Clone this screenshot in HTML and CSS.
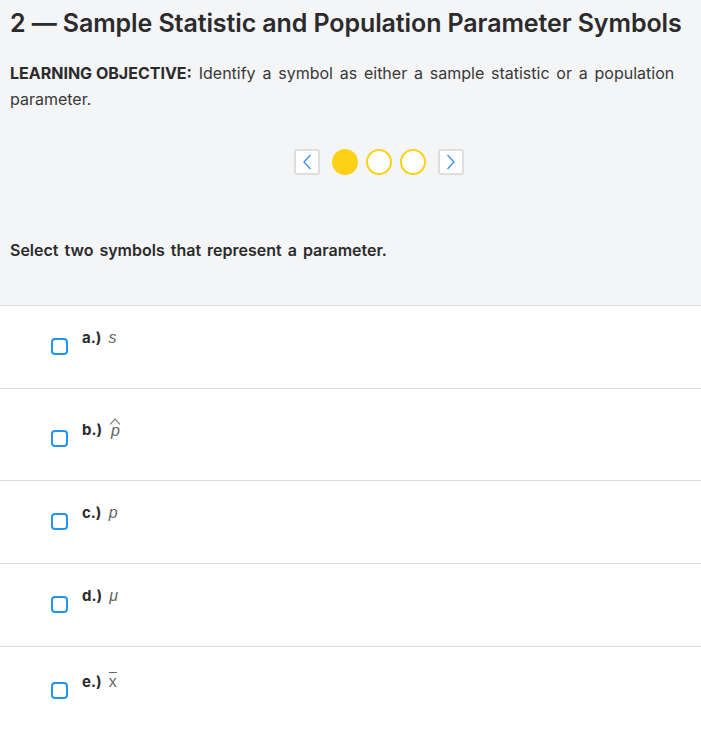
FILE: index.html
```
<!DOCTYPE html>
<html lang="en">
<head>
<meta charset="utf-8">
<title>Sample Statistic and Population Parameter Symbols</title>
<link rel="stylesheet" href="styles.css">
</head>
<body>
<section class="intro">
  <h1 class="title">2 — Sample Statistic and Population Parameter Symbols</h1>
  <p class="objective"><strong>LEARNING OBJECTIVE:</strong> Identify a symbol as either a sample statistic or a population parameter.</p>
  <div class="pager">
    <button class="nav-btn" aria-label="Previous">
      <svg width="10" height="16" viewBox="0 0 10 16"><path d="M8.5 1 L2 8 L8.5 15" fill="none" stroke="#3a8fe8" stroke-width="1.3"/></svg>
    </button>
    <span class="dot dot-active"></span>
    <span class="dot"></span>
    <span class="dot"></span>
    <button class="nav-btn" aria-label="Next">
      <svg width="10" height="16" viewBox="0 0 10 16"><path d="M1.5 1 L8 8 L1.5 15" fill="none" stroke="#3a8fe8" stroke-width="1.3"/></svg>
    </button>
  </div>
  <p class="question">Select two symbols that represent a parameter.</p>
</section>
<ul class="choices">
  <li class="choice">
    <span class="box"></span>
    <span class="label"><b>a.)</b> <i class="sym">s</i></span>
  </li>
  <li class="choice">
    <span class="box"></span>
    <span class="label"><b>b.)</b> <span class="hat"><svg class="hat-mark" width="12" height="7" viewBox="0 0 12 7"><path d="M1 6.5 L6 1 L11 6.5" fill="none" stroke="#666" stroke-width="1.1"/></svg><i class="sym">p</i></span></span>
  </li>
  <li class="choice">
    <span class="box"></span>
    <span class="label"><b>c.)</b> <i class="sym">p</i></span>
  </li>
  <li class="choice">
    <span class="box"></span>
    <span class="label"><b>d.)</b> <i class="sym">μ</i></span>
  </li>
  <li class="choice">
    <span class="box"></span>
    <span class="label"><b>e.)</b> <span class="bar"><i class="sym bar-sym">x</i></span></span>
  </li>
</ul>
</body>
</html>
```
FILE: styles.css
```
html, body {
  margin: 0;
  padding: 0;
  background: #ffffff;
}
body {
  font-family: "Inter", "Liberation Sans", sans-serif;
  color: #2d2d2d;
}
.intro {
  background: #f4f5f7;
  padding: 7px 10px 0 10px;
  border-bottom: 1px solid #dcdcdc;
  height: 298px;
}
.title {
  margin: 0;
  font-size: 25px;
  line-height: 32px;
  font-weight: 600;
  color: #2b2b2b;
  letter-spacing: -0.1px;
}
.objective {
  margin: 21px 0 0 0;
  font-size: 16px;
  line-height: 26px;
  color: #383838;
  word-spacing: 2.3px;
}
.objective strong {
  font-weight: 700;
  color: #2b2b2b;
  word-spacing: 0;
}
.pager {
  display: flex;
  align-items: center;
  justify-content: center;
  gap: 8px;
  margin: 37px 0 0 57px;
}
.nav-btn {
  width: 26px;
  height: 26px;
  padding: 0;
  border: 2px solid #dedede;
  border-radius: 3px;
  background: #fff;
  display: flex;
  align-items: center;
  justify-content: center;
}
.dot {
  width: 22px;
  height: 22px;
  border-radius: 50%;
  border: 2px solid #fcd116;
  background: #fff;
}
.dot-active {
  background: #fcd116;
}
.pager .nav-btn:first-child {
  margin-right: 4px;
}
.pager .nav-btn:last-child {
  margin-left: 4px;
}
.question {
  margin: 63px 0 0 0;
  font-size: 16px;
  line-height: 24px;
  font-weight: 600;
  color: #2b2b2b;
  word-spacing: 2px;
}
.choices {
  list-style: none;
  margin: 0;
  padding: 0;
}
.choice {
  display: flex;
  align-items: flex-end;
  gap: 14px;
  padding: 22px 0 34px 51px;
  border-bottom: 1px solid #dcdcdc;
}
.choice:last-child {
  border-bottom: none;
}
.box {
  flex: none;
  width: 13px;
  height: 13px;
  border: 2px solid #2196f0;
  border-radius: 4px;
  margin-bottom: -1px;
}
.label {
  font-size: 15px;
  line-height: 20px;
  margin-bottom: 6px;
}
.label b {
  font-weight: 700;
  color: #2b2b2b;
  margin-right: 3px;
}
.sym {
  font-family: "Liberation Sans", Arial, sans-serif;
  font-style: italic;
  color: #666;
  font-size: 16px;
}
.hat {
  display: inline-flex;
  flex-direction: column;
  align-items: center;
  vertical-align: bottom;
  line-height: 18px;
  padding-top: 7px;
}
.hat-mark {
  display: block;
  margin-bottom: -3px;
}
.bar-sym {
  text-decoration: overline;
  font-style: normal;
}
.bar {
  display: inline-block;
  padding-top: 3px;
}
```
